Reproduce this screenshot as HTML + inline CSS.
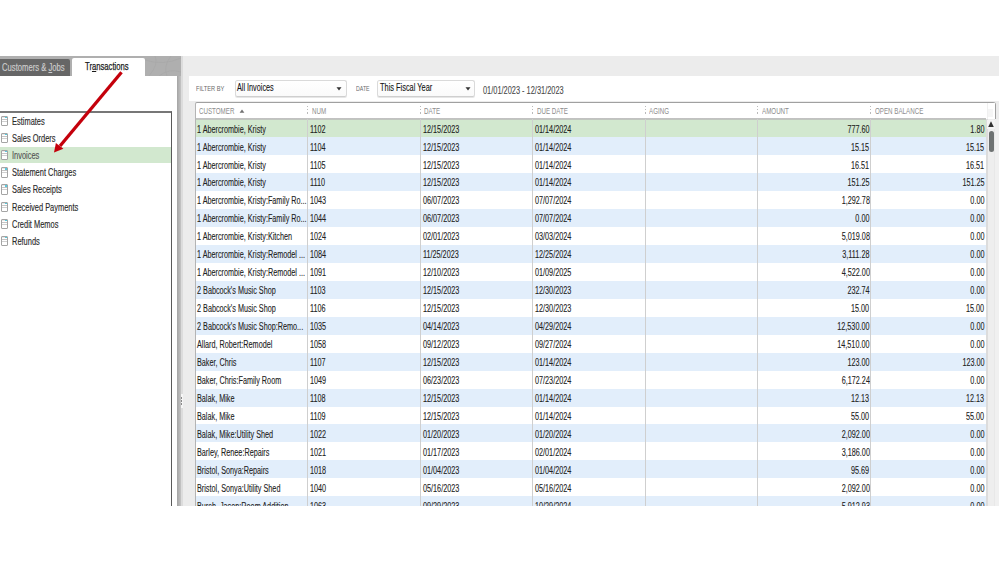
<!DOCTYPE html>
<html><head><meta charset="utf-8">
<style>
*{margin:0;padding:0;box-sizing:border-box}
html,body{width:999px;height:562px;overflow:hidden;background:#fff;position:relative;font-family:"Liberation Sans",sans-serif}
.a{position:absolute}
.t{position:absolute;white-space:nowrap;transform-origin:0 50%;transform:scaleX(.725);font-size:10px;color:#222;line-height:12px;-webkit-text-stroke:.1px #222}
.tr{position:absolute;white-space:nowrap;transform-origin:100% 50%;transform:scaleX(.725);font-size:10px;color:#222;line-height:12px;text-align:right;-webkit-text-stroke:.1px #222}
.h{position:absolute;white-space:nowrap;transform-origin:0 50%;transform:scaleX(.73);font-size:8.5px;color:#8c8c8c;line-height:10px}
.l{position:absolute;white-space:nowrap;transform-origin:0 50%;transform:scaleX(.71);font-size:10.5px;color:#222;line-height:12px;-webkit-text-stroke:.15px currentColor}
.grip{position:absolute;width:1.3px;height:8px;background:repeating-linear-gradient(#bababa 0 1.4px,transparent 1.4px 3.1px)}
.ic{position:absolute;width:6.5px;height:10.5px;border:1px solid #a4a4a4;border-radius:1px;background:linear-gradient(#e8e8e8 0 1px,#fff 1px 2.2px,#c4c4c4 2.2px 3px,#fff 3px 4.2px,#d0d0d0 4.2px 5px,#fff 5px)}
.ic:after{content:"";position:absolute;right:0;top:0;width:1.5px;height:1.5px;background:#5cc8dc}
</style></head><body>

<div class="a" style="left:0;top:56px;width:181px;height:20px;background:#afafaf"></div>
<svg class="a" style="left:145px;top:56px" width="36" height="20"><g stroke="#a6a6a6" stroke-width=".6" fill="none"><path d="M0 4 Q18 10 36 2"/><path d="M4 20 Q14 8 10 0"/><path d="M22 20 Q18 10 26 0"/><path d="M36 16 Q24 12 14 20"/></g></svg>
<div class="a" style="left:0;top:59px;width:70px;height:17px;background:#666;border-radius:0 2px 0 0"></div>
<div class="l" style="left:2px;top:61px;color:#cfcfcf;transform:scaleX(.73)">Customers &amp; <u>J</u>obs</div>
<div class="a" style="left:72px;top:58px;width:73px;height:18px;background:#fff;border-radius:2px 2px 0 0"></div>
<div class="l" style="left:84.8px;top:60.3px;color:#1a1a1a;transform:scaleX(.73);-webkit-text-stroke:.25px #1a1a1a">Tr<u>a</u>nsactions</div>
<div class="a" style="left:0;top:76px;width:177px;height:430px;background:#fff;border-radius:0 2px 0 0"></div>
<div class="a" style="left:177px;top:76px;width:4px;height:430px;background:linear-gradient(90deg,#a4a4a4,#c4c4c4)"></div>
<div class="a" style="left:181px;top:56px;width:2px;height:450px;background:#dcdcdc"></div>
<div class="a" style="left:180.5px;top:394px;width:2.5px;height:14px;background:#f6f6f6"></div><div class="grip" style="left:181px;top:396.5px;height:9px;background:repeating-linear-gradient(#8a8a8a 0 1.6px,transparent 1.6px 3.1px)"></div>
<div class="a" style="left:-2px;top:111px;width:174px;height:395px;border:1px solid #5a5a5a;border-top:2px solid #777;border-bottom:none"></div>
<div class="a" style="left:0;top:146.9px;width:171px;height:16.6px;background:#d2e8cf"></div>
<div class="ic" style="left:1px;top:115.5px"></div>
<div class="l" style="left:12px;top:114.5px;color:#2a2a2a">Estimates</div>
<div class="ic" style="left:1px;top:132.7px"></div>
<div class="l" style="left:12px;top:131.7px;color:#2a2a2a">Sales Orders</div>
<div class="ic" style="left:1px;top:149.9px"></div>
<div class="l" style="left:12px;top:148.9px;color:#555">Invoices</div>
<div class="ic" style="left:1px;top:167.1px"></div>
<div class="l" style="left:12px;top:166.1px;color:#2a2a2a">Statement Charges</div>
<div class="ic" style="left:1px;top:184.3px"></div>
<div class="l" style="left:12px;top:183.3px;color:#2a2a2a">Sales Receipts</div>
<div class="ic" style="left:1px;top:201.5px"></div>
<div class="l" style="left:12px;top:200.5px;color:#2a2a2a">Received Payments</div>
<div class="ic" style="left:1px;top:218.7px"></div>
<div class="l" style="left:12px;top:217.7px;color:#2a2a2a">Credit Memos</div>
<div class="ic" style="left:1px;top:235.9px"></div>
<div class="l" style="left:12px;top:234.9px;color:#2a2a2a">Refunds</div>
<div class="a" style="left:183px;top:56px;width:816px;height:450px;background:#ececec"></div>
<div class="a" style="left:189px;top:76px;width:810px;height:25px;background:#fff"></div>
<div class="h" style="left:196px;top:83.5px;color:#6a6a6a;font-size:7.5px;transform:scaleX(.76)">FILTER BY</div>
<div class="a" style="left:235px;top:79.5px;width:112px;height:17px;border:1px solid #dadada;border-bottom-color:#cfcfcf;border-radius:2.5px;background:linear-gradient(#fff,#fafafa);box-shadow:0 1px 0 #e6e6e6"></div>
<div class="t" style="left:236.5px;top:82px;color:#111">All Invoices</div>
<div class="h" style="left:355.5px;top:83.5px;color:#6a6a6a;font-size:7.5px;transform:scaleX(.70)">DATE</div>
<div class="a" style="left:377px;top:80px;width:98px;height:16.5px;border:1px solid #dadada;border-bottom-color:#cfcfcf;border-radius:2.5px;background:linear-gradient(#fff,#fafafa);box-shadow:0 1px 0 #e6e6e6"></div>
<div class="t" style="left:379.5px;top:82px;color:#111;transform:scaleX(.74)">This Fiscal Year</div>
<div class="t" style="left:483px;top:84.5px;color:#4a4a4a;-webkit-text-stroke:.1px #4a4a4a;transform:scaleX(.74)">01/01/2023 - 12/31/2023</div>
<div class="a" style="left:195px;top:102px;width:801px;height:410px;border:1px solid #a0a0a0;border-left-color:#b4b4b4;border-radius:2px 3px 0 0;background:#fff"></div>
<div class="a" style="left:196px;top:118px;width:790px;height:1.5px;background:#c4c4c4"></div>
<div class="a" style="left:986.5px;top:103px;width:8.5px;height:15.5px;background:#fff;border-left:1px solid #f0f0f0"></div><div class="a" style="left:988px;top:109px;width:5px;height:8px;background:#f5f5f5"></div>
<div class="a" style="left:196px;top:119.30px;width:790px;height:18.00px;background:#d2e8cf"></div>
<div class="t" style="left:196.8px;top:123.6px">1 Abercrombie, Kristy</div>
<div class="t" style="left:310px;top:123.6px">1102</div>
<div class="t" style="left:422.5px;top:123.6px">12/15/2023</div>
<div class="t" style="left:535px;top:123.6px">01/14/2024</div>
<div class="tr" style="right:129.5px;top:123.6px">777.60</div>
<div class="tr" style="right:14.5px;top:123.6px">1.80</div>
<div class="a" style="left:196px;top:137.25px;width:790px;height:18.00px;background:#e2eefb"></div>
<div class="t" style="left:196.8px;top:141.55px">1 Abercrombie, Kristy</div>
<div class="t" style="left:310px;top:141.55px">1104</div>
<div class="t" style="left:422.5px;top:141.55px">12/15/2023</div>
<div class="t" style="left:535px;top:141.55px">01/14/2024</div>
<div class="tr" style="right:129.5px;top:141.55px">15.15</div>
<div class="tr" style="right:14.5px;top:141.55px">15.15</div>
<div class="a" style="left:196px;top:155.20px;width:790px;height:18.00px;background:#ffffff"></div>
<div class="t" style="left:196.8px;top:159.5px">1 Abercrombie, Kristy</div>
<div class="t" style="left:310px;top:159.5px">1105</div>
<div class="t" style="left:422.5px;top:159.5px">12/15/2023</div>
<div class="t" style="left:535px;top:159.5px">01/14/2024</div>
<div class="tr" style="right:129.5px;top:159.5px">16.51</div>
<div class="tr" style="right:14.5px;top:159.5px">16.51</div>
<div class="a" style="left:196px;top:173.15px;width:790px;height:18.00px;background:#e2eefb"></div>
<div class="t" style="left:196.8px;top:177.45px">1 Abercrombie, Kristy</div>
<div class="t" style="left:310px;top:177.45px">1110</div>
<div class="t" style="left:422.5px;top:177.45px">12/15/2023</div>
<div class="t" style="left:535px;top:177.45px">01/14/2024</div>
<div class="tr" style="right:129.5px;top:177.45px">151.25</div>
<div class="tr" style="right:14.5px;top:177.45px">151.25</div>
<div class="a" style="left:196px;top:191.10px;width:790px;height:18.00px;background:#ffffff"></div>
<div class="t" style="left:196.8px;top:195.4px">1 Abercrombie, Kristy:Family Ro...</div>
<div class="t" style="left:310px;top:195.4px">1043</div>
<div class="t" style="left:422.5px;top:195.4px">06/07/2023</div>
<div class="t" style="left:535px;top:195.4px">07/07/2024</div>
<div class="tr" style="right:129.5px;top:195.4px">1,292.78</div>
<div class="tr" style="right:14.5px;top:195.4px">0.00</div>
<div class="a" style="left:196px;top:209.05px;width:790px;height:18.00px;background:#e2eefb"></div>
<div class="t" style="left:196.8px;top:213.35px">1 Abercrombie, Kristy:Family Ro...</div>
<div class="t" style="left:310px;top:213.35px">1044</div>
<div class="t" style="left:422.5px;top:213.35px">06/07/2023</div>
<div class="t" style="left:535px;top:213.35px">07/07/2024</div>
<div class="tr" style="right:129.5px;top:213.35px">0.00</div>
<div class="tr" style="right:14.5px;top:213.35px">0.00</div>
<div class="a" style="left:196px;top:227.00px;width:790px;height:18.00px;background:#ffffff"></div>
<div class="t" style="left:196.8px;top:231.3px">1 Abercrombie, Kristy:Kitchen</div>
<div class="t" style="left:310px;top:231.3px">1024</div>
<div class="t" style="left:422.5px;top:231.3px">02/01/2023</div>
<div class="t" style="left:535px;top:231.3px">03/03/2024</div>
<div class="tr" style="right:129.5px;top:231.3px">5,019.08</div>
<div class="tr" style="right:14.5px;top:231.3px">0.00</div>
<div class="a" style="left:196px;top:244.95px;width:790px;height:18.00px;background:#e2eefb"></div>
<div class="t" style="left:196.8px;top:249.25px">1 Abercrombie, Kristy:Remodel ...</div>
<div class="t" style="left:310px;top:249.25px">1084</div>
<div class="t" style="left:422.5px;top:249.25px">11/25/2023</div>
<div class="t" style="left:535px;top:249.25px">12/25/2024</div>
<div class="tr" style="right:129.5px;top:249.25px">3,111.28</div>
<div class="tr" style="right:14.5px;top:249.25px">0.00</div>
<div class="a" style="left:196px;top:262.90px;width:790px;height:18.00px;background:#ffffff"></div>
<div class="t" style="left:196.8px;top:267.2px">1 Abercrombie, Kristy:Remodel ...</div>
<div class="t" style="left:310px;top:267.2px">1091</div>
<div class="t" style="left:422.5px;top:267.2px">12/10/2023</div>
<div class="t" style="left:535px;top:267.2px">01/09/2025</div>
<div class="tr" style="right:129.5px;top:267.2px">4,522.00</div>
<div class="tr" style="right:14.5px;top:267.2px">0.00</div>
<div class="a" style="left:196px;top:280.85px;width:790px;height:18.00px;background:#e2eefb"></div>
<div class="t" style="left:196.8px;top:285.15px">2 Babcock&#39;s Music Shop</div>
<div class="t" style="left:310px;top:285.15px">1103</div>
<div class="t" style="left:422.5px;top:285.15px">12/15/2023</div>
<div class="t" style="left:535px;top:285.15px">12/30/2023</div>
<div class="tr" style="right:129.5px;top:285.15px">232.74</div>
<div class="tr" style="right:14.5px;top:285.15px">0.00</div>
<div class="a" style="left:196px;top:298.80px;width:790px;height:18.00px;background:#ffffff"></div>
<div class="t" style="left:196.8px;top:303.1px">2 Babcock&#39;s Music Shop</div>
<div class="t" style="left:310px;top:303.1px">1106</div>
<div class="t" style="left:422.5px;top:303.1px">12/15/2023</div>
<div class="t" style="left:535px;top:303.1px">12/30/2023</div>
<div class="tr" style="right:129.5px;top:303.1px">15.00</div>
<div class="tr" style="right:14.5px;top:303.1px">15.00</div>
<div class="a" style="left:196px;top:316.75px;width:790px;height:18.00px;background:#e2eefb"></div>
<div class="t" style="left:196.8px;top:321.05px">2 Babcock&#39;s Music Shop:Remo...</div>
<div class="t" style="left:310px;top:321.05px">1035</div>
<div class="t" style="left:422.5px;top:321.05px">04/14/2023</div>
<div class="t" style="left:535px;top:321.05px">04/29/2024</div>
<div class="tr" style="right:129.5px;top:321.05px">12,530.00</div>
<div class="tr" style="right:14.5px;top:321.05px">0.00</div>
<div class="a" style="left:196px;top:334.70px;width:790px;height:18.00px;background:#ffffff"></div>
<div class="t" style="left:196.8px;top:339.0px">Allard, Robert:Remodel</div>
<div class="t" style="left:310px;top:339.0px">1058</div>
<div class="t" style="left:422.5px;top:339.0px">09/12/2023</div>
<div class="t" style="left:535px;top:339.0px">09/27/2024</div>
<div class="tr" style="right:129.5px;top:339.0px">14,510.00</div>
<div class="tr" style="right:14.5px;top:339.0px">0.00</div>
<div class="a" style="left:196px;top:352.65px;width:790px;height:18.00px;background:#e2eefb"></div>
<div class="t" style="left:196.8px;top:356.95px">Baker, Chris</div>
<div class="t" style="left:310px;top:356.95px">1107</div>
<div class="t" style="left:422.5px;top:356.95px">12/15/2023</div>
<div class="t" style="left:535px;top:356.95px">01/14/2024</div>
<div class="tr" style="right:129.5px;top:356.95px">123.00</div>
<div class="tr" style="right:14.5px;top:356.95px">123.00</div>
<div class="a" style="left:196px;top:370.60px;width:790px;height:18.00px;background:#ffffff"></div>
<div class="t" style="left:196.8px;top:374.9px">Baker, Chris:Family Room</div>
<div class="t" style="left:310px;top:374.9px">1049</div>
<div class="t" style="left:422.5px;top:374.9px">06/23/2023</div>
<div class="t" style="left:535px;top:374.9px">07/23/2024</div>
<div class="tr" style="right:129.5px;top:374.9px">6,172.24</div>
<div class="tr" style="right:14.5px;top:374.9px">0.00</div>
<div class="a" style="left:196px;top:388.55px;width:790px;height:18.00px;background:#e2eefb"></div>
<div class="t" style="left:196.8px;top:392.85px">Balak, Mike</div>
<div class="t" style="left:310px;top:392.85px">1108</div>
<div class="t" style="left:422.5px;top:392.85px">12/15/2023</div>
<div class="t" style="left:535px;top:392.85px">01/14/2024</div>
<div class="tr" style="right:129.5px;top:392.85px">12.13</div>
<div class="tr" style="right:14.5px;top:392.85px">12.13</div>
<div class="a" style="left:196px;top:406.50px;width:790px;height:18.00px;background:#ffffff"></div>
<div class="t" style="left:196.8px;top:410.8px">Balak, Mike</div>
<div class="t" style="left:310px;top:410.8px">1109</div>
<div class="t" style="left:422.5px;top:410.8px">12/15/2023</div>
<div class="t" style="left:535px;top:410.8px">01/14/2024</div>
<div class="tr" style="right:129.5px;top:410.8px">55.00</div>
<div class="tr" style="right:14.5px;top:410.8px">55.00</div>
<div class="a" style="left:196px;top:424.45px;width:790px;height:18.00px;background:#e2eefb"></div>
<div class="t" style="left:196.8px;top:428.75px">Balak, Mike:Utility Shed</div>
<div class="t" style="left:310px;top:428.75px">1022</div>
<div class="t" style="left:422.5px;top:428.75px">01/20/2023</div>
<div class="t" style="left:535px;top:428.75px">01/20/2024</div>
<div class="tr" style="right:129.5px;top:428.75px">2,092.00</div>
<div class="tr" style="right:14.5px;top:428.75px">0.00</div>
<div class="a" style="left:196px;top:442.40px;width:790px;height:18.00px;background:#ffffff"></div>
<div class="t" style="left:196.8px;top:446.7px">Barley, Renee:Repairs</div>
<div class="t" style="left:310px;top:446.7px">1021</div>
<div class="t" style="left:422.5px;top:446.7px">01/17/2023</div>
<div class="t" style="left:535px;top:446.7px">02/01/2024</div>
<div class="tr" style="right:129.5px;top:446.7px">3,186.00</div>
<div class="tr" style="right:14.5px;top:446.7px">0.00</div>
<div class="a" style="left:196px;top:460.35px;width:790px;height:18.00px;background:#e2eefb"></div>
<div class="t" style="left:196.8px;top:464.65px">Bristol, Sonya:Repairs</div>
<div class="t" style="left:310px;top:464.65px">1018</div>
<div class="t" style="left:422.5px;top:464.65px">01/04/2023</div>
<div class="t" style="left:535px;top:464.65px">01/04/2024</div>
<div class="tr" style="right:129.5px;top:464.65px">95.69</div>
<div class="tr" style="right:14.5px;top:464.65px">0.00</div>
<div class="a" style="left:196px;top:478.30px;width:790px;height:18.00px;background:#ffffff"></div>
<div class="t" style="left:196.8px;top:482.6px">Bristol, Sonya:Utility Shed</div>
<div class="t" style="left:310px;top:482.6px">1040</div>
<div class="t" style="left:422.5px;top:482.6px">05/16/2023</div>
<div class="t" style="left:535px;top:482.6px">05/16/2024</div>
<div class="tr" style="right:129.5px;top:482.6px">2,092.00</div>
<div class="tr" style="right:14.5px;top:482.6px">0.00</div>
<div class="a" style="left:196px;top:496.25px;width:790px;height:18.00px;background:#e2eefb"></div>
<div class="t" style="left:196.8px;top:500.55px">Burch, Jason:Room Addition</div>
<div class="t" style="left:310px;top:500.55px">1063</div>
<div class="t" style="left:422.5px;top:500.55px">09/29/2023</div>
<div class="t" style="left:535px;top:500.55px">10/29/2024</div>
<div class="tr" style="right:129.5px;top:500.55px">5,912.93</div>
<div class="tr" style="right:14.5px;top:500.55px">0.00</div>
<div class="a" style="left:196px;top:118px;width:790px;height:2px;background:linear-gradient(#c8c8c8,#b9b9b9 60%,#cddcc9)"></div>
<div class="a" style="left:307px;top:119px;width:1px;height:390px;background:#cfcfcf"></div>
<div class="a" style="left:420px;top:119px;width:1px;height:390px;background:#cfcfcf"></div>
<div class="a" style="left:532px;top:119px;width:1px;height:390px;background:#cfcfcf"></div>
<div class="a" style="left:645px;top:119px;width:1px;height:390px;background:#cfcfcf"></div>
<div class="a" style="left:757px;top:119px;width:1px;height:390px;background:#cfcfcf"></div>
<div class="a" style="left:870px;top:119px;width:1px;height:390px;background:#cfcfcf"></div>
<div class="h" style="left:199px;top:106.3px">CUSTOMER</div>
<div class="h" style="left:311.5px;top:106.3px">NUM</div>
<div class="h" style="left:424px;top:106.3px">DATE</div>
<div class="h" style="left:536.5px;top:106.3px">DUE DATE</div>
<div class="h" style="left:649px;top:106.3px">AGING</div>
<div class="h" style="left:761.5px;top:106.3px">AMOUNT</div>
<div class="h" style="left:874.5px;top:106.3px">OPEN BALANCE</div>
<div class="grip" style="left:306.6px;top:106.2px"></div>
<div class="grip" style="left:419.6px;top:106.2px"></div>
<div class="grip" style="left:531.6px;top:106.2px"></div>
<div class="grip" style="left:644.6px;top:106.2px"></div>
<div class="grip" style="left:756.6px;top:106.2px"></div>
<div class="grip" style="left:869.6px;top:106.2px"></div>
<div class="a" style="left:986px;top:119px;width:13px;height:390px;background:linear-gradient(90deg,#dcdcdc 0 1.5px,#eeeeee 1.5px 8px,#e8e8e8 8px 9px,#f0f0f0 9px)"></div>
<div class="a" style="left:987px;top:119.5px;width:8px;height:9px;background:#f4f4f4"></div>
<svg class="a" style="left:0;top:0" width="999" height="562"><polygon points="988.2,127 993.8,127 991,121.3" fill="#333"/><polygon points="239.6,112.8 244.4,112.8 242,109.6" fill="#707070"/><polygon points="336.5,87.3 341.5,87.3 339,90.5" fill="#333"/><polygon points="465.5,87.3 470.5,87.3 468,90.5" fill="#333"/></svg>
<div class="a" style="left:988.5px;top:131px;width:5px;height:20.5px;background:#6e7272;border-radius:2.5px"></div>
<svg class="a" style="left:0;top:0" width="999" height="562" viewBox="0 0 999 562">
<line x1="121.5" y1="72.2" x2="60" y2="146" stroke="#c4000b" stroke-width="3.3" stroke-linecap="butt"/>
<polygon points="54,152.4 55.9,143.1 63.4,148.7" fill="#c4000b"/>
</svg>
<div class="a" style="left:0;top:505.6px;width:999px;height:57px;background:#fff"></div>
</body></html>
